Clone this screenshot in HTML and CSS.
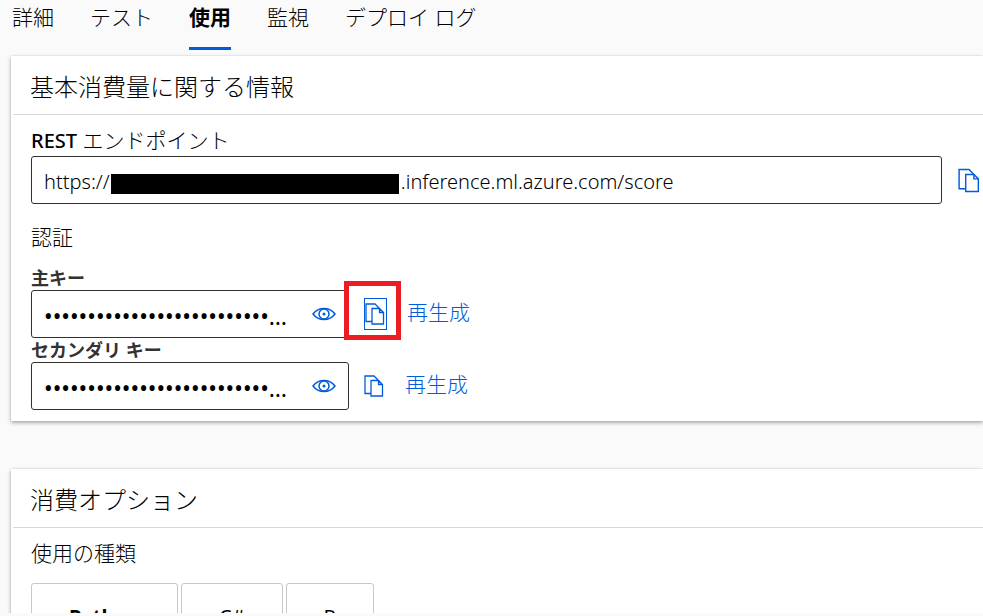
FILE: index.html
```html
<!DOCTYPE html>
<html lang="ja">
<head>
    <meta charset="UTF-8">
    <meta name="viewport" content="width=device-width, initial-scale=1.0">
    <title>エンドポイント - 使用</title>
    <link rel="stylesheet" href="styles.css">
</head>
<body>
    <!-- アイコン定義 -->
    <svg class="icon-defs" width="0" height="0" aria-hidden="true">
        <symbol id="icon-copy" viewBox="0 0 20 22">
            <path d="M6.5 18.5H1V1H10L14.5 5.5M7 5.5H14.5L18.5 9.5V21H7ZM14.5 5.5V9.5H18.5"/>
        </symbol>
        <symbol id="icon-eye" viewBox="0 0 24 14">
            <path d="M1 7C4 3 8 1.5 12 1.5S20 3 23 7C20 11 16 12.5 12 12.5S4 11 1 7Z"/>
            <circle cx="12" cy="7" r="5"/>
            <circle class="pupil" cx="12" cy="7" r="1.5"/>
        </symbol>
    </svg>

    <!-- タブ -->
    <nav class="tabs">
        <a class="tab" href="#">詳細</a>
        <a class="tab" href="#">テスト</a>
        <a class="tab active" href="#" aria-current="page">使用</a>
        <a class="tab" href="#">監視</a>
        <a class="tab" href="#">デプロイ ログ</a>
    </nav>

    <main class="content">
        <!-- 基本消費量 -->
        <section class="card">
            <h2 class="card-title">基本消費量に関する情報</h2>
            <div class="card-body">
                <label class="label" for="endpoint"><b>REST</b> エンドポイント</label>
                <div class="row endpoint-row">
                    <div class="field">
                        <input id="endpoint" class="input" type="text" readonly value="https://&nbsp;&nbsp;&nbsp;&nbsp;&nbsp;&nbsp;&nbsp;&nbsp;&nbsp;&nbsp;&nbsp;&nbsp;&nbsp;&nbsp;&nbsp;&nbsp;&nbsp;&nbsp;&nbsp;&nbsp;&nbsp;&nbsp;&nbsp;&nbsp;&nbsp;&nbsp;&nbsp;&nbsp;&nbsp;&nbsp;&nbsp;&nbsp;&nbsp;&nbsp;&nbsp;&nbsp;&nbsp;&nbsp;&nbsp;&nbsp;&nbsp;&nbsp;&nbsp;&nbsp;&nbsp;&nbsp;&nbsp;&nbsp;&nbsp;&nbsp;&nbsp;&nbsp;&nbsp;&nbsp;&nbsp;&nbsp;.inference.ml.azure.com/score">
                        <span class="redacted"></span>
                    </div>
                    <button class="copy-btn large" type="button" aria-label="コピー"><svg><use href="#icon-copy"/></svg></button>
                </div>

                <h3 class="label auth-title">認証</h3>
                <label class="key-label" for="key1">主キー</label>
                <div class="row">
                    <div class="field key-field">
                        <input id="key1" class="input key-input" type="password" readonly value="0000000000000000000000000000000000000000">
                        <button class="eye-btn" type="button" aria-label="表示"><svg><use href="#icon-eye"/></svg></button>
                    </div>
                    <button class="copy-btn focused" type="button" aria-label="コピー"><svg><use href="#icon-copy"/></svg></button>
                    <a class="regenerate" href="#">再生成</a>
                </div>
                <label class="key-label" for="key2">セカンダリ キー</label>
                <div class="row">
                    <div class="field key-field">
                        <input id="key2" class="input key-input" type="password" readonly value="0000000000000000000000000000000000000000">
                        <button class="eye-btn" type="button" aria-label="表示"><svg><use href="#icon-eye"/></svg></button>
                    </div>
                    <button class="copy-btn" type="button" aria-label="コピー"><svg><use href="#icon-copy"/></svg></button>
                    <a class="regenerate" href="#">再生成</a>
                </div>
            </div>
        </section>

        <!-- 消費オプション -->
        <section class="card">
            <h2 class="card-title">消費オプション</h2>
            <div class="card-body">
                <h3 class="label">使用の種類</h3>
                <div class="languages">
                    <button class="lang-btn active" type="button">Python</button>
                    <button class="lang-btn" type="button">C#</button>
                    <button class="lang-btn" type="button">R</button>
                </div>
            </div>
        </section>
    </main>
</body>
</html>
```
FILE: styles.css
```css
* {
    box-sizing: border-box;
}
body {
    display: flex;
    flex-direction: column;
    height: 100vh;
    margin: 0;
    padding-bottom: 3px;
    overflow: hidden;
    background: #fafafa;
    color: #000;
    font-family: "Segoe UI", "Noto Sans", "Noto Sans CJK JP", sans-serif;
    font-size: 21px;
    font-weight: 300;
}
h2, h3 {
    margin: 0;
    font-weight: 300;
}
button {
    padding: 0;
    border: none;
    background: none;
    font-family: inherit;
    cursor: pointer;
}
svg {
    display: block;
    fill: none;
    stroke: #015cda;
}
.icon-defs {
    position: absolute;
}
/* タブ */
.tabs {
    display: flex;
    flex: none;
    gap: 36px;
    padding-left: 12px;
}
.tab {
    height: 50px;
    border-bottom: 3px solid transparent;
    color: #000;
    line-height: 34px;
    text-decoration: none;
    white-space: nowrap;
}
.tab.active {
    border-color: #015cda;
    font-weight: 700;
}
/* カード */
.content {
    flex: 1;
    min-height: 0;
    padding: 6px 0 0 11px;
    overflow: hidden;
}
.card {
    margin-bottom: 48px;
    background: #fff;
    box-shadow: 0 2px 4px rgba(0, 0, 0, 0.3), 0 0 2px rgba(0, 0, 0, 0.15);
}
.card-title {
    margin-left: 2px;
    padding: 13px 17px 9px;
    border-bottom: 1px solid #d6d6d6;
    font-size: 24px;
    line-height: 36px;
}
.card-body {
    padding: 10px 20px 11px;
}
.label {
    display: block;
    font-size: 21px;
    line-height: 30px;
}
.label b {
    font-size: 20px;
    font-weight: 500;
}
.auth-title {
    margin: 18px 0 14px;
}
.key-label {
    display: block;
    color: #333;
    font-size: 18px;
    font-weight: 600;
    line-height: 24px;
}
/* 入力欄 */
.row {
    display: flex;
    align-items: center;
}
.endpoint-row {
    gap: 16px;
    margin-right: -17px;
}
.field {
    position: relative;
    display: flex;
    flex: 1;
    align-items: center;
    height: 48px;
    border: 1px solid #323130;
    border-radius: 3px;
    background: #fff;
}
.key-field {
    flex: none;
    width: 318px;
    margin-right: 15px;
    padding-right: 12px;
}
.input {
    flex: 1;
    min-width: 0;
    height: 46px;
    padding: 2px 12px 0;
    border: none;
    outline: none;
    background: transparent;
    color: #000;
    font-family: inherit;
    font-size: 20px;
    font-weight: 300;
    text-overflow: ellipsis;
}
.key-input {
    padding-top: 4px;
    padding-right: 24px;
    font-size: 23px;
    font-weight: 400;
}
.redacted {
    position: absolute;
    top: 17px;
    left: 79px;
    width: 288px;
    height: 20px;
    background: #000;
}
.eye-btn svg {
    width: 24px;
    height: 14px;
    stroke-width: 1.5;
}
.pupil {
    fill: #015cda;
    stroke: none;
}
.copy-btn {
    position: relative;
    width: 21px;
    height: 32px;
}
.copy-btn svg {
    width: 20px;
    height: 22px;
    stroke-width: 1.3;
}
.copy-btn.large {
    width: 22px;
}
.copy-btn.large svg {
    width: 22px;
    height: 25px;
}
.copy-btn.focused {
    width: 23px;
    border: 1px solid #015cda;
}
/* 強調枠 */
.copy-btn.focused::after {
    content: "";
    position: absolute;
    top: -18px;
    right: -15px;
    bottom: -11px;
    left: -21px;
    border: 5px solid #ed1c24;
}
.regenerate {
    margin-left: 20px;
    padding-bottom: 4px;
    color: #015cda;
    line-height: 30px;
    text-decoration: none;
}
/* 言語ボタン */
.languages {
    display: flex;
    gap: 3px;
    margin-top: 15px;
}
.lang-btn {
    height: 66px;
    padding: 0 37px;
    border: 1px solid #c8c8c8;
    border-radius: 3px;
    background: #fff;
    color: #000;
    font-size: 20px;
}
.lang-btn.active {
    font-weight: 700;
}
```
